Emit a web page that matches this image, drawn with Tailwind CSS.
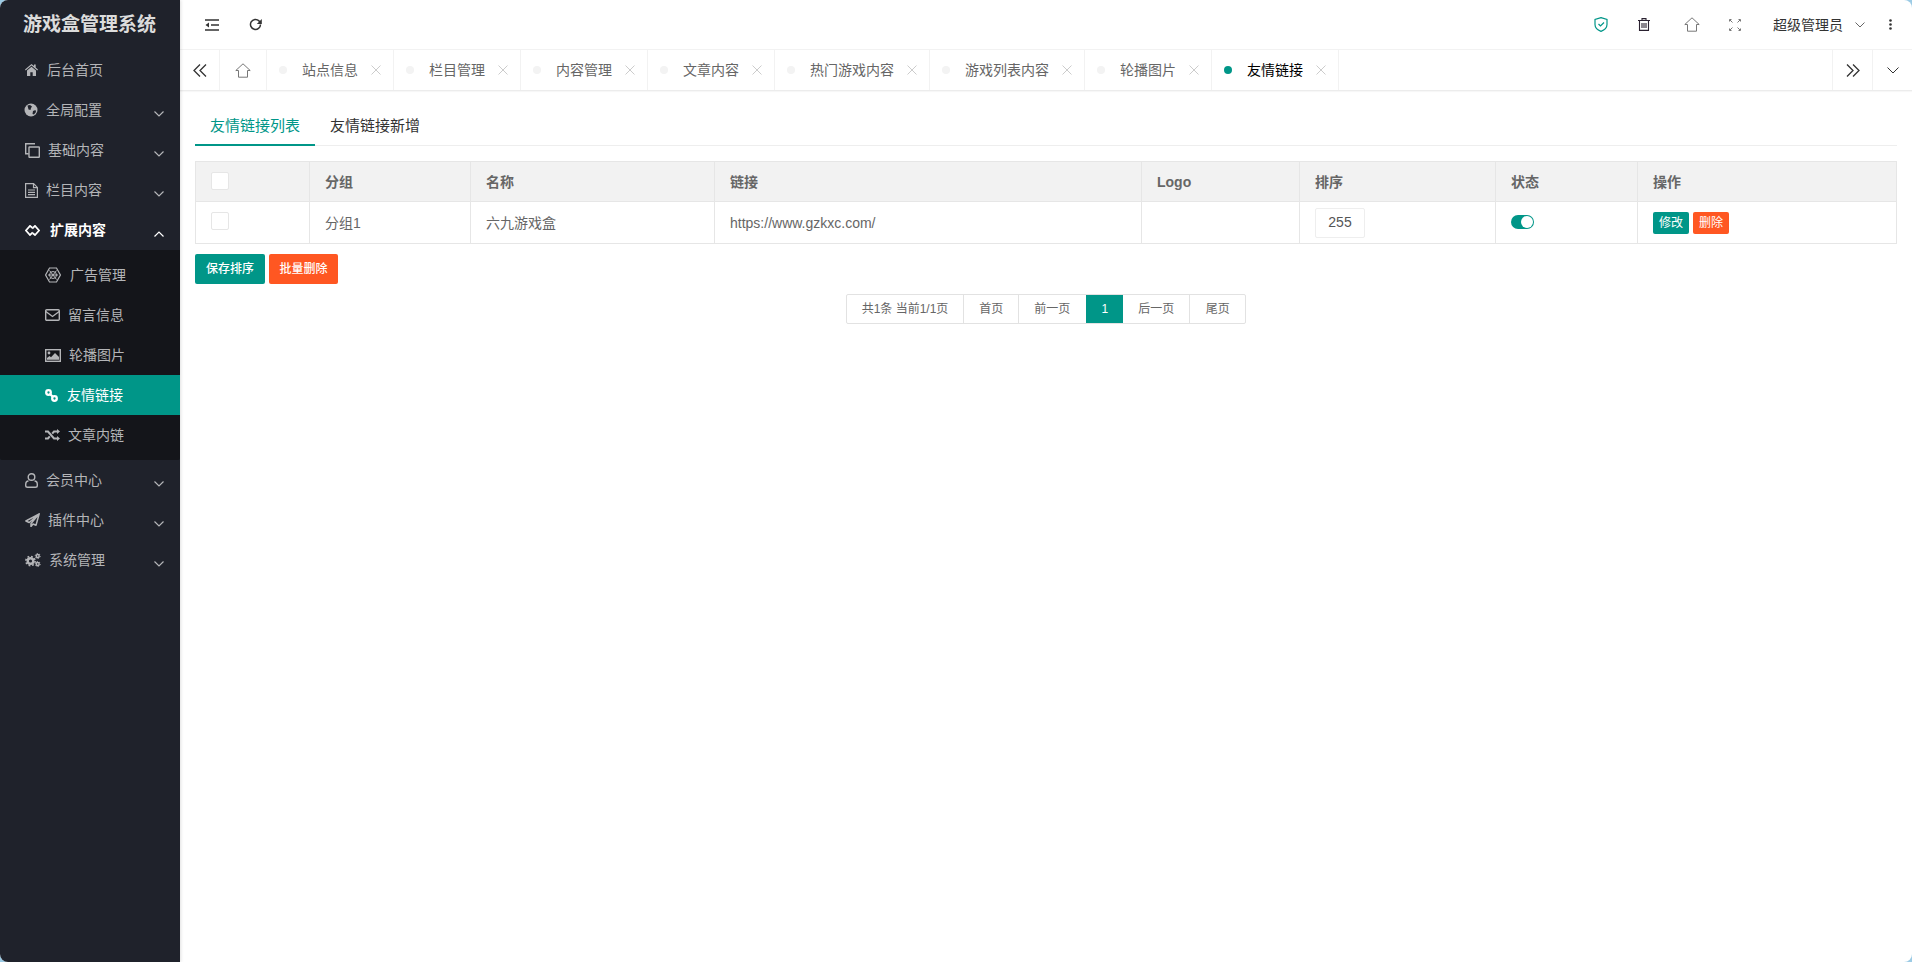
<!DOCTYPE html>
<html lang="zh-CN">
<head>
    <title>游戏盒管理系统</title>
    <meta name="viewport" content="width=device-width, initial-scale=1">
    <script src="https://cdn.jsdelivr.net/npm/@tailwindcss/browser@4"></script>
</head>
<body class="bg-[#9ccbe5] font-['Liberation_Sans','Noto_Sans_CJK_SC',sans-serif]">
    <div class="flex h-[962px] w-[1912px] overflow-hidden rounded-[8px] bg-white">

        <!-- Sidebar -->
        <aside class="relative z-10 flex w-[180px] shrink-0 flex-col bg-[#1f222b] text-[14px] text-[#b4b5b8] shadow-[1px_0_3px_rgba(0,0,0,0.12)]">
            <div class="flex h-[50px] items-center pl-[23px] text-[19px] leading-[24px] font-bold whitespace-nowrap text-[#dcdcdc]">游戏盒管理系统</div>

            <a class="flex h-10 items-center pl-[25px]">
                <svg class="w-[13px] h-[12px]" viewBox="0 0 13 12" fill="currentColor"><path d="M6.500 0 0 5.600l.7.8L6.500 1.500l5.800 4.900.7-.8-2.300-2V.6H9v1.300zM2 6.500V12h3.300V8.300h2.400V12H11V6.500L6.500 2.700z"/></svg>
                <span class="ml-[9px] leading-5">后台首页</span>
            </a>
            <a class="flex h-10 items-center pl-[24px]">
                <svg class="w-[14px] h-[14px]" viewBox="0 0 14 14"><circle cx="7" cy="7" r="6.500" fill="currentColor"/><path d="M3.500 2.500 6 2l2 1.500-1 1.500-.5 2-2-.5zM9 8l2.500-1 .5 2-2 2.500-1.500-.5z" fill="#1f222b"/></svg>
                <span class="ml-[8px] leading-5">全局配置</span>
                <svg class="mt-[8px] ml-auto mr-[16px] w-[10px] h-[6px]" viewBox="0 0 10 6" fill="none" stroke="currentColor" stroke-width="1.200"><path d="m.5.5 4.500 4.500L9.500.5"/></svg>
            </a>
            <a class="flex h-10 items-center pl-[25px]">
                <svg class="w-[15px] h-[15px]" viewBox="0 0 15 15" fill="none" stroke="currentColor" stroke-width="1.400"><path d="M10 .7H.7v10h3"/><rect x="4" y="4" width="10.300" height="10.300" rx=".5"/></svg>
                <span class="ml-[8px] leading-5">基础内容</span>
                <svg class="mt-[8px] ml-auto mr-[16px] w-[10px] h-[6px]" viewBox="0 0 10 6" fill="none" stroke="currentColor" stroke-width="1.200"><path d="m.5.5 4.500 4.500L9.500.5"/></svg>
            </a>
            <a class="flex h-10 items-center pl-[25px]">
                <svg class="w-[13px] h-[15px]" viewBox="0 0 13 15" fill="none" stroke="currentColor" stroke-width="1.200"><path d="M.6.6h8l3.800 3.800v10H.6zM8.500.6v4h4M3 7h7M3 9.300h7M3 11.600h7"/></svg>
                <span class="ml-[8px] leading-5">栏目内容</span>
                <svg class="mt-[8px] ml-auto mr-[16px] w-[10px] h-[6px]" viewBox="0 0 10 6" fill="none" stroke="currentColor" stroke-width="1.200"><path d="m.5.5 4.500 4.500L9.500.5"/></svg>
            </a>
            <a class="flex h-10 items-center pl-[25px] font-bold text-white">
                <svg class="w-[15px] h-[11px]" viewBox="0 0 15 11" fill="none" stroke="currentColor" stroke-width="1.800"><path d="M7.200 2.800 5 .9.900 5.500 5 10l2.800-2.700"/><path d="M7.800 8.200 10 10l4.100-4.500L10 .9 7.200 3.700"/></svg>
                <span class="ml-[10px] leading-5">扩展内容</span>
                <svg class="mt-[8px] ml-auto mr-[16px] w-[10px] h-[6px]" viewBox="0 0 10 6" fill="none" stroke="currentColor" stroke-width="1.200"><path d="M.5 5.500 5 1l4.500 4.500"/></svg>
            </a>

            <!-- Submenu -->
            <div class="flex flex-col rounded-b-[2px] bg-[#14151a] py-[5px]">
                <a class="flex h-10 items-center pl-[45px]">
                    <svg class="w-[16px] h-[16px]" viewBox="0 0 16 16" fill="none" stroke="currentColor" stroke-width="1.200"><path d="M4.500 1h7L15.400 8l-3.900 7h-7L.6 8z"/><path d="M4.500 3.500l7 9M11.500 3.500l-7 9M3 8h10" stroke-width="1"/><circle cx="8" cy="8" r="3.500" stroke-width="1"/></svg>
                    <span class="ml-[9px] leading-5">广告管理</span>
                </a>
                <a class="flex h-10 items-center pl-[45px]">
                    <svg class="w-[15px] h-[12px]" viewBox="0 0 15 12" fill="none" stroke="currentColor" stroke-width="1.400"><rect x=".7" y=".7" width="13.600" height="10.600" rx="1"/><path d="M.8 2.500 7.500 7.500l6.700-5"/></svg>
                    <span class="ml-[8px] leading-5">留言信息</span>
                </a>
                <a class="flex h-10 items-center pl-[45px]">
                    <svg class="w-[16px] h-[13px]" viewBox="0 0 16 13"><rect x=".7" y=".7" width="14.600" height="11.600" fill="none" stroke="currentColor" stroke-width="1.400"/><circle cx="4" cy="4" r="1.400" fill="currentColor"/><path d="M2 10.800V9l2.500-2 1.500 1.200L10 4l4 4v2.800z" fill="currentColor"/></svg>
                    <span class="ml-[8px] leading-5">轮播图片</span>
                </a>
                <a class="flex h-10 items-center bg-[#009688] pl-[45px] text-white">
                    <svg class="w-[13px] h-[13px]" viewBox="0 0 13 13" fill="none" stroke="currentColor" stroke-width="2.300"><circle cx="3.500" cy="3.500" r="2.300"/><circle cx="9.500" cy="9.500" r="2.300"/><path d="m5 5 3 3"/></svg>
                    <span class="ml-[9px] leading-5">友情链接</span>
                </a>
                <a class="flex h-10 items-center pl-[45px]">
                    <svg class="w-[15px] h-[12px]" viewBox="0 0 15 12" fill="none" stroke="currentColor" stroke-width="2"><path d="M0 2.500h3l6 7h3.500M0 9.500h3l1.800-2.200M7.200 4.700 9 2.500h3.500"/><path d="m12 0 3 2.500L12 5zM12 7l3 2.500-3 2.500z" fill="currentColor" stroke="none"/></svg>
                    <span class="ml-[8px] leading-5">文章内链</span>
                </a>
            </div>

            <a class="flex h-10 items-center pl-[25px]">
                <svg class="w-[13px] h-[15px]" viewBox="0 0 13 15" fill="none" stroke="currentColor" stroke-width="1.400"><circle cx="6.500" cy="4" r="3.300"/><path d="M3.500 8C1.500 8 .7 9.500.7 11.500v1c0 1 .7 1.800 1.800 1.800h8c1.100 0 1.800-.8 1.800-1.800v-1C12.300 9.500 11.500 8 9.500 8"/></svg>
                <span class="ml-[8px] leading-5">会员中心</span>
                <svg class="mt-[8px] ml-auto mr-[16px] w-[10px] h-[6px]" viewBox="0 0 10 6" fill="none" stroke="currentColor" stroke-width="1.200"><path d="m.5.5 4.500 4.500L9.500.5"/></svg>
            </a>
            <a class="flex h-10 items-center pl-[25px]">
                <svg class="w-[15px] h-[14px]" viewBox="0 0 15 14" fill="none" stroke="currentColor" stroke-width="1.500"><path d="M14.200.8.900 8l3.300 1.500L14.200.8 6 10.500v3l2-2.500 3 1.200z" stroke-linejoin="round"/></svg>
                <span class="ml-[8px] leading-5">插件中心</span>
                <svg class="mt-[8px] ml-auto mr-[16px] w-[10px] h-[6px]" viewBox="0 0 10 6" fill="none" stroke="currentColor" stroke-width="1.200"><path d="m.5.5 4.500 4.500L9.500.5"/></svg>
            </a>
            <a class="flex h-10 items-center pl-[25px]">
                <svg class="w-[16px] h-[14px]" viewBox="0 0 16 14" fill="none" stroke="currentColor"><circle cx="5.500" cy="8" r="2.800" stroke-width="2.400"/><circle cx="5.500" cy="8" r="4.600" stroke-width="1.600" stroke-dasharray="1.800 1.800"/><circle cx="12.700" cy="3" r="1.500" stroke-width="1.400"/><circle cx="12.700" cy="3" r="2.500" stroke-width="1" stroke-dasharray="1.300 1.300"/><circle cx="12.700" cy="11" r="1.500" stroke-width="1.400"/><circle cx="12.700" cy="11" r="2.500" stroke-width="1" stroke-dasharray="1.300 1.300"/></svg>
                <span class="ml-[8px] leading-5">系统管理</span>
                <svg class="mt-[8px] ml-auto mr-[16px] w-[10px] h-[6px]" viewBox="0 0 10 6" fill="none" stroke="currentColor" stroke-width="1.200"><path d="m.5.5 4.500 4.500L9.500.5"/></svg>
            </a>
        </aside>

        <!-- Main -->
        <main class="flex min-w-0 flex-1 flex-col">
            <!-- Top bar -->
            <header class="flex h-[50px] shrink-0 items-center border-b border-[#f2f2f2] pl-[25px] text-[#333]">
                <svg class="w-[14px] h-[12px]" viewBox="0 0 14 12" fill="none" stroke="currentColor" stroke-width="1.300"><path d="M0 1h14M6 6h8M0 11h14"/><path d="M4 3.500v5L.5 6z" fill="currentColor" stroke="none"/></svg>
                <svg class="ml-[30px] w-[13px] h-[13px]" viewBox="0 0 13 13" fill="none" stroke="currentColor" stroke-width="1.500"><path d="M11.500 6.500a5 5 0 1 1-1.500-3.600L11.500 4.500"/><path d="M12.800 1v5h-5z" fill="currentColor" stroke="none"/></svg>

                <div class="ml-auto flex items-center pr-[20px]">
                    <svg class="w-[14px] h-[15px] text-[#009688]" viewBox="0 0 14 15" fill="none" stroke="currentColor" stroke-width="1.200"><path d="M7 .6 13 2.500v5c0 3-2.500 5.500-6 6.900-3.500-1.400-6-3.900-6-6.900v-5z"/><path d="m4.500 7 2 2 3.500-3.500"/></svg>
                    <svg class="ml-[30px] w-[12px] h-[13px] text-[#2a2130]" viewBox="0 0 12 13" fill="none" stroke="currentColor" stroke-width="1.100"><path d="M0 2.500h12M4 2.500V.6h4v1.900M1.500 2.500v9.900h9v-9.900M4 5v5M6 5v5M8 5v5"/></svg>
                    <svg class="ml-[34px] w-[16px] h-[15px] text-[#777]" viewBox="0 0 16 15" fill="none" stroke="currentColor" stroke-width="1"><path d="M8 .8.800 7.500h2.700v6.700h9V7.500h2.700z" stroke-linejoin="round"/></svg>
                    <svg class="ml-[29px] w-[12px] h-[12px] text-[#777]" viewBox="0 0 12 12" fill="none" stroke="currentColor" stroke-width="1"><path d="M.5 2.500v-2h2M9.500.5h2v2M11.500 9.500v2h-2M2.500 11.500h-2v-2M1 1l2.500 2.500M11 1 8.500 3.500M11 11 8.500 8.500M1 11l2.500-2.500"/></svg>
                    <span class="ml-[32px] text-[14px] leading-5 whitespace-nowrap">超级管理员</span>
                    <svg class="ml-[12px] w-[10px] h-[6px] text-[#666]" viewBox="0 0 10 6" fill="none" stroke="currentColor" stroke-width="1"><path d="m.5.5 4.500 4.500L9.500.5"/></svg>
                    <svg class="ml-[24px] w-[3px] h-[11px] text-[#333]" viewBox="0 0 3 11" fill="currentColor"><circle cx="1.500" cy="1.500" r="1.300"/><circle cx="1.500" cy="5.500" r="1.300"/><circle cx="1.500" cy="9.500" r="1.300"/></svg>
                </div>
            </header>

            <!-- Open tabs -->
            <div class="flex h-[41px] shrink-0 items-stretch border-b border-[#ececec] text-[14px] text-[#666] shadow-[0_1px_1px_rgba(0,0,0,0.03)]">
                <div class="flex w-[40px] items-center justify-center border-r border-[#f2f2f2] text-[#333]">
                    <svg class="w-[14px] h-[13px]" viewBox="0 0 14 13" fill="none" stroke="currentColor" stroke-width="1.300"><path d="M7 .5 1 6.500l6 6M13 .5l-6 6 6 6"/></svg>
                </div>
                <div class="flex w-[47px] items-center justify-center border-r border-[#f2f2f2] text-[#777]">
                    <svg class="w-[16px] h-[15px]" viewBox="0 0 16 15" fill="none" stroke="currentColor" stroke-width="1"><path d="M8 .8.800 7.500h2.700v6.700h9V7.500h2.700z" stroke-linejoin="round"/></svg>
                </div>
                <div class="flex items-center border-r border-[#f2f2f2] pr-[12px] pl-[12px]"><i class="h-2 w-2 rounded-full bg-[#f3f3f3]"></i><span class="ml-[15px] leading-5 whitespace-nowrap">站点信息</span><svg class="ml-[13px] w-[10px] h-[10px] text-[#ccc]" viewBox="0 0 10 10" stroke="currentColor"><path d="m.5.5 9 9M9.500.5l-9 9"/></svg></div>
                <div class="flex items-center border-r border-[#f2f2f2] pr-[12px] pl-[12px]"><i class="h-2 w-2 rounded-full bg-[#f3f3f3]"></i><span class="ml-[15px] leading-5 whitespace-nowrap">栏目管理</span><svg class="ml-[13px] w-[10px] h-[10px] text-[#ccc]" viewBox="0 0 10 10" stroke="currentColor"><path d="m.5.5 9 9M9.500.5l-9 9"/></svg></div>
                <div class="flex items-center border-r border-[#f2f2f2] pr-[12px] pl-[12px]"><i class="h-2 w-2 rounded-full bg-[#f3f3f3]"></i><span class="ml-[15px] leading-5 whitespace-nowrap">内容管理</span><svg class="ml-[13px] w-[10px] h-[10px] text-[#ccc]" viewBox="0 0 10 10" stroke="currentColor"><path d="m.5.5 9 9M9.500.5l-9 9"/></svg></div>
                <div class="flex items-center border-r border-[#f2f2f2] pr-[12px] pl-[12px]"><i class="h-2 w-2 rounded-full bg-[#f3f3f3]"></i><span class="ml-[15px] leading-5 whitespace-nowrap">文章内容</span><svg class="ml-[13px] w-[10px] h-[10px] text-[#ccc]" viewBox="0 0 10 10" stroke="currentColor"><path d="m.5.5 9 9M9.500.5l-9 9"/></svg></div>
                <div class="flex items-center border-r border-[#f2f2f2] pr-[12px] pl-[12px]"><i class="h-2 w-2 rounded-full bg-[#f3f3f3]"></i><span class="ml-[15px] leading-5 whitespace-nowrap">热门游戏内容</span><svg class="ml-[13px] w-[10px] h-[10px] text-[#ccc]" viewBox="0 0 10 10" stroke="currentColor"><path d="m.5.5 9 9M9.500.5l-9 9"/></svg></div>
                <div class="flex items-center border-r border-[#f2f2f2] pr-[12px] pl-[12px]"><i class="h-2 w-2 rounded-full bg-[#f3f3f3]"></i><span class="ml-[15px] leading-5 whitespace-nowrap">游戏列表内容</span><svg class="ml-[13px] w-[10px] h-[10px] text-[#ccc]" viewBox="0 0 10 10" stroke="currentColor"><path d="m.5.5 9 9M9.500.5l-9 9"/></svg></div>
                <div class="flex items-center border-r border-[#f2f2f2] pr-[12px] pl-[12px]"><i class="h-2 w-2 rounded-full bg-[#f3f3f3]"></i><span class="ml-[15px] leading-5 whitespace-nowrap">轮播图片</span><svg class="ml-[13px] w-[10px] h-[10px] text-[#ccc]" viewBox="0 0 10 10" stroke="currentColor"><path d="m.5.5 9 9M9.500.5l-9 9"/></svg></div>
                <div class="flex items-center border-r border-[#f2f2f2] pr-[12px] pl-[12px]"><i class="h-2 w-2 rounded-full bg-[#009688]"></i><span class="ml-[15px] leading-5 whitespace-nowrap text-black">友情链接</span><svg class="ml-[13px] w-[10px] h-[10px] text-[#ccc]" viewBox="0 0 10 10" stroke="currentColor"><path d="m.5.5 9 9M9.500.5l-9 9"/></svg></div>
                <div class="ml-auto flex w-[40px] items-center justify-center border-l border-[#f2f2f2] text-[#333]">
                    <svg class="w-[14px] h-[13px]" viewBox="0 0 14 13" fill="none" stroke="currentColor" stroke-width="1.300"><path d="m1 .5 6 6-6 6M7 .5l6 6-6 6"/></svg>
                </div>
                <div class="flex w-[40px] items-center justify-center border-l border-[#f2f2f2] text-[#333]">
                    <svg class="w-[12px] h-[7px]" viewBox="0 0 12 7" fill="none" stroke="currentColor" stroke-width="1"><path d="m.5.5 5.500 5.500L11.500.5"/></svg>
                </div>
            </div>

            <!-- Page -->
            <div class="flex flex-col px-[15px] pt-[15px]">
                <div class="flex h-[40px] border-b border-[#eee] text-[15px] text-[#333]">
                    <div class="h-[40px] w-[120px] border-b-2 border-[#009688] pt-[9px] text-center leading-[22px] text-[#009688]">友情链接列表</div>
                    <div class="w-[120px] pt-[9px] text-center leading-[22px]">友情链接新增</div>
                </div>

                <table class="mt-[15px] w-full table-fixed border-collapse text-left text-[14px] text-[#666]">
                    <colgroup>
                        <col class="w-[114px]"><col class="w-[161px]"><col class="w-[244px]"><col class="w-[427px]"><col class="w-[158px]"><col class="w-[196px]"><col class="w-[142px]"><col>
                    </colgroup>
                    <thead>
                        <tr class="h-[40px] bg-[#f2f2f2]">
                            <th class="border border-[#e6e6e6] px-[15px] pt-[2px]"><div class="-mt-[3px] h-[18px] w-[18px] rounded-[2px] border border-[#e6e6e6] bg-white"></div></th>
                            <th class="border border-[#e6e6e6] px-[15px] pt-[2px] font-bold">分组</th>
                            <th class="border border-[#e6e6e6] px-[15px] pt-[2px] font-bold">名称</th>
                            <th class="border border-[#e6e6e6] px-[15px] pt-[2px] font-bold">链接</th>
                            <th class="border border-[#e6e6e6] px-[15px] pt-[2px] font-bold">Logo</th>
                            <th class="border border-[#e6e6e6] px-[15px] pt-[2px] font-bold">排序</th>
                            <th class="border border-[#e6e6e6] px-[15px] pt-[2px] font-bold">状态</th>
                            <th class="border border-[#e6e6e6] px-[15px] pt-[2px] font-bold">操作</th>
                        </tr>
                    </thead>
                    <tbody>
                        <tr class="h-[42px]">
                            <td class="border border-[#e6e6e6] px-[15px]"><div class="-mt-[3px] h-[18px] w-[18px] rounded-[2px] border border-[#e6e6e6] bg-white"></div></td>
                            <td class="border border-[#e6e6e6] px-[15px] pt-[2px]">分组1</td>
                            <td class="border border-[#e6e6e6] px-[15px] pt-[2px]">六九游戏盒</td>
                            <td class="border border-[#e6e6e6] px-[15px] pt-[2px]">https://www.gzkxc.com/</td>
                            <td class="border border-[#e6e6e6] px-[15px]"></td>
                            <td class="border border-[#e6e6e6] px-[15px]"><div class="flex h-[30px] w-[50px] items-center justify-center rounded-[2px] border border-[#eee] text-[#555]">255</div></td>
                            <td class="border border-[#e6e6e6] px-[15px] pt-[2px]"><div class="-mt-[3px] flex h-[14px] w-[23px] items-center justify-end rounded-full bg-[#009688] pr-[1px]"><i class="h-[12px] w-[12px] rounded-full bg-white"></i></div></td>
                            <td class="border border-[#e6e6e6] px-[15px] pt-[2px]">
                                <div class="-mt-[2px] flex gap-[4px]">
                                    <span class="h-[22px] w-[36px] rounded-[2px] bg-[#009688] text-center text-[12px] leading-[22px] text-white">修改</span>
                                    <span class="h-[22px] w-[36px] rounded-[2px] bg-[#FF5722] text-center text-[12px] leading-[22px] text-white">删除</span>
                                </div>
                            </td>
                        </tr>
                    </tbody>
                </table>

                <div class="mt-[10px] flex gap-[4px] text-[12px] font-medium text-white">
                    <span class="h-[30px] w-[70px] rounded-[2px] bg-[#009688] text-center leading-[30px]">保存排序</span>
                    <span class="h-[30px] w-[69px] rounded-[2px] bg-[#FF5722] text-center leading-[30px]">批量删除</span>
                </div>

                <div class="mt-[10px] flex justify-center">
                    <div class="flex h-[30px] overflow-hidden rounded-[2px] border border-[#e2e2e2] text-[12px] leading-[28px] text-[#666]">
                        <span class="border-r border-[#e2e2e2] px-[15px] whitespace-nowrap">共1条 当前1/1页</span>
                        <span class="border-r border-[#e2e2e2] px-[15px]">首页</span>
                        <span class="pr-[16px] pl-[15px]">前一页</span>
                        <span class="-my-px w-[37px] bg-[#009688] text-center leading-[30px] text-white">1</span>
                        <span class="border-r border-[#e2e2e2] px-[15px]">后一页</span>
                        <span class="w-[55px] text-center">尾页</span>
                    </div>
                </div>
            </div>
        </main>
    </div>
</body>
</html>
